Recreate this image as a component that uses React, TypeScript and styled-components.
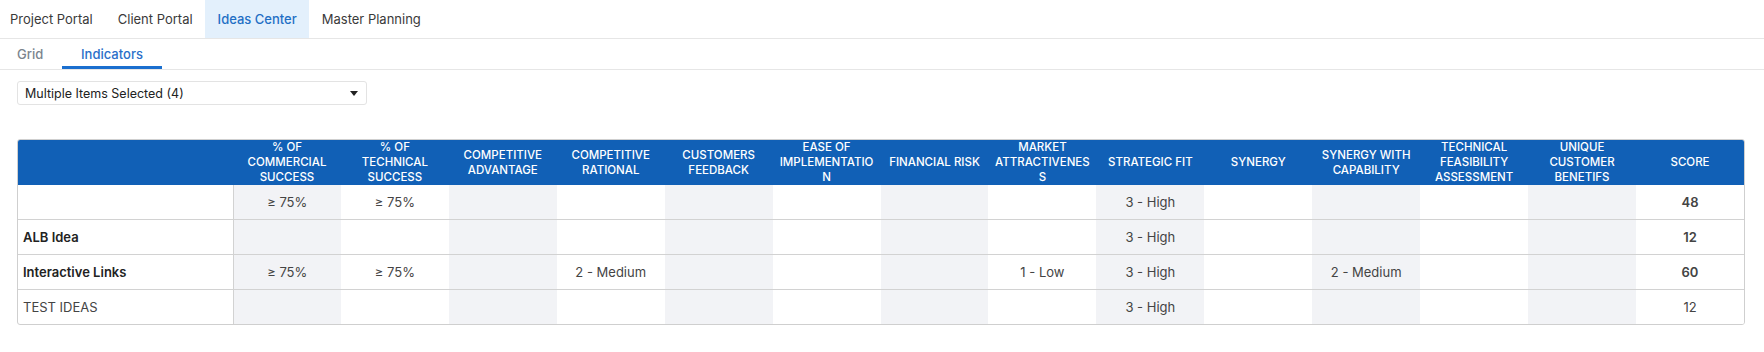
import React from "react";
import styled, { createGlobalStyle } from "styled-components";

const GlobalStyle = createGlobalStyle`
  body {
    margin: 0;
    background: #fff;
    font-family: Inter, "Noto Sans", sans-serif;
    color: #333;
  }
`;

// header labels, "\n" forces the break the way the source grid shows it
const columns = [
  "% of commercial success",
  "% of\ntechnical success",
  "competitive advantage",
  "competitive rational",
  "customers feedback",
  "ease of implementation",
  "financial risk",
  "market attractiveness",
  "strategic fit",
  "synergy",
  "synergy with capability",
  "technical feasibility assessment",
  "unique customer benetifs",
  "score",
];

type Row = { name: string; bold: boolean; cells: string[] };

const rows: Row[] = [
  {
    name: "",
    bold: true,
    cells: ["≥ 75%", "≥ 75%", "", "", "", "", "", "", "3 - High", "", "", "", "", "48"],
  },
  {
    name: "ALB Idea",
    bold: true,
    cells: ["", "", "", "", "", "", "", "", "3 - High", "", "", "", "", "12"],
  },
  {
    name: "Interactive Links",
    bold: true,
    cells: ["≥ 75%", "≥ 75%", "", "2 - Medium", "", "", "", "1 - Low", "3 - High", "", "2 - Medium", "", "", "60"],
  },
  {
    name: "TEST IDEAS",
    bold: false,
    cells: ["", "", "", "", "", "", "", "", "3 - High", "", "", "", "", "12"],
  },
];

const App = () => {
  return (
    <>
      <GlobalStyle />
      <TopTabs>
        <TopTab>Project Portal</TopTab>
        <TopTab>Client Portal</TopTab>
        <TopTab active>Ideas Center</TopTab>
        <TopTab>Master Planning</TopTab>
      </TopTabs>
      <SubTabs>
        <SubTab>Grid</SubTab>
        <SubTab active>Indicators</SubTab>
      </SubTabs>
      <Select>
        <span>Multiple Items Selected (4)</span>
        <Caret />
      </Select>
      <TableWrap>
        <Table>
          <colgroup>
            <col style={{ width: 215 }} />
            {columns.map((c) => (
              <col key={c} />
            ))}
          </colgroup>
          <thead>
            <tr>
              <Th />
              {columns.map((c) => (
                <Th key={c}>{c}</Th>
              ))}
            </tr>
          </thead>
          <tbody>
            {rows.map((r, i) => (
              <tr key={i}>
                <NameCell bold={r.bold}>{r.name}</NameCell>
                {r.cells.map((v, j) => (
                  <Td
                    key={j}
                    shaded={j % 2 === 0}
                    bold={j === 13 && r.bold}
                  >
                    {v}
                  </Td>
                ))}
              </tr>
            ))}
          </tbody>
        </Table>
      </TableWrap>
    </>
  );
};

export default App;

const TopTabs = styled.div`
  display: flex;
  height: 38px;
  border-bottom: 1px solid #e6e6e6;
`;

const TopTab = styled.div<{ active?: boolean }>`
  display: flex;
  align-items: center;
  padding: 0 12.5px;
  font-size: 13px;
  color: ${(p) => (p.active ? "#1f6fc5" : "#3a3a3a")};
  background: ${(p) => (p.active ? "#e3f0fc" : "transparent")};
  font-weight: ${(p) => (p.active ? 500 : 400)};
  &:first-child {
    padding-left: 10px;
  }
`;

const SubTabs = styled.div`
  display: flex;
  height: 30px;
  border-bottom: 1px solid #e6e6e6;
`;

const SubTab = styled.div<{ active?: boolean }>`
  display: flex;
  align-items: center;
  box-sizing: border-box;
  width: ${(p) => (p.active ? "100px" : "62px")};
  padding: 3px 0 0 ${(p) => (p.active ? "0" : "17px")};
  justify-content: ${(p) => (p.active ? "center" : "flex-start")};
  font-size: 13px;
  font-weight: 500;
  color: ${(p) => (p.active ? "#2a6fc9" : "#7b848e")};
  border-bottom: 3px solid ${(p) => (p.active ? "#1a6fcf" : "transparent")};
`;

const Select = styled.div`
  display: flex;
  align-items: center;
  justify-content: space-between;
  box-sizing: border-box;
  width: 350px;
  height: 24px;
  margin: 11px 0 0 17px;
  padding: 0 7px 0 7px;
  border: 1px solid #e3e3e3;
  border-radius: 3px;
  font-size: 12.5px;
  color: #222;
`;

const Caret = styled.span`
  width: 0;
  height: 0;
  border-left: 4.5px solid transparent;
  border-right: 4.5px solid transparent;
  border-top: 5px solid #222;
  margin-right: 1px;
`;

const TableWrap = styled.div`
  margin: 34px 0 0 17px;
  width: 1728px;
  border: 1px solid #cfcfcf;
  border-radius: 3px;
  overflow: hidden;
  box-sizing: border-box;
`;

const Table = styled.table`
  width: 100%;
  border-collapse: collapse;
  table-layout: fixed;
`;

const Th = styled.th`
  background: #1160b6;
  color: #fff;
  height: 45px;
  padding: 0 3px;
  font-size: 11.5px;
  font-weight: 500;
  line-height: 15px;
  text-transform: uppercase;
  text-align: center;
  vertical-align: middle;
  overflow-wrap: anywhere;
  white-space: pre-line;
`;

const NameCell = styled.td<{ bold: boolean }>`
  height: 34px;
  padding: 0 0 0 5px;
  font-size: 13px;
  font-weight: ${(p) => (p.bold ? 600 : 400)};
  color: ${(p) => (p.bold ? "#222" : "#444")};
  border-top: 1px solid #d2d2d2;
  border-right: 1px solid #d2d2d2;
  tr:first-child > & {
    border-top: none;
  }
`;

const Td = styled.td<{ shaded: boolean; bold: boolean }>`
  height: 34px;
  padding: 0;
  text-align: center;
  font-size: 13px;
  color: #444;
  font-weight: ${(p) => (p.bold ? 600 : 400)};
  background: ${(p) => (p.shaded ? "#f2f3f6" : "#fff")};
  border-top: 1px solid #d2d2d2;
  tr:first-child > & {
    border-top: none;
  }
`;
